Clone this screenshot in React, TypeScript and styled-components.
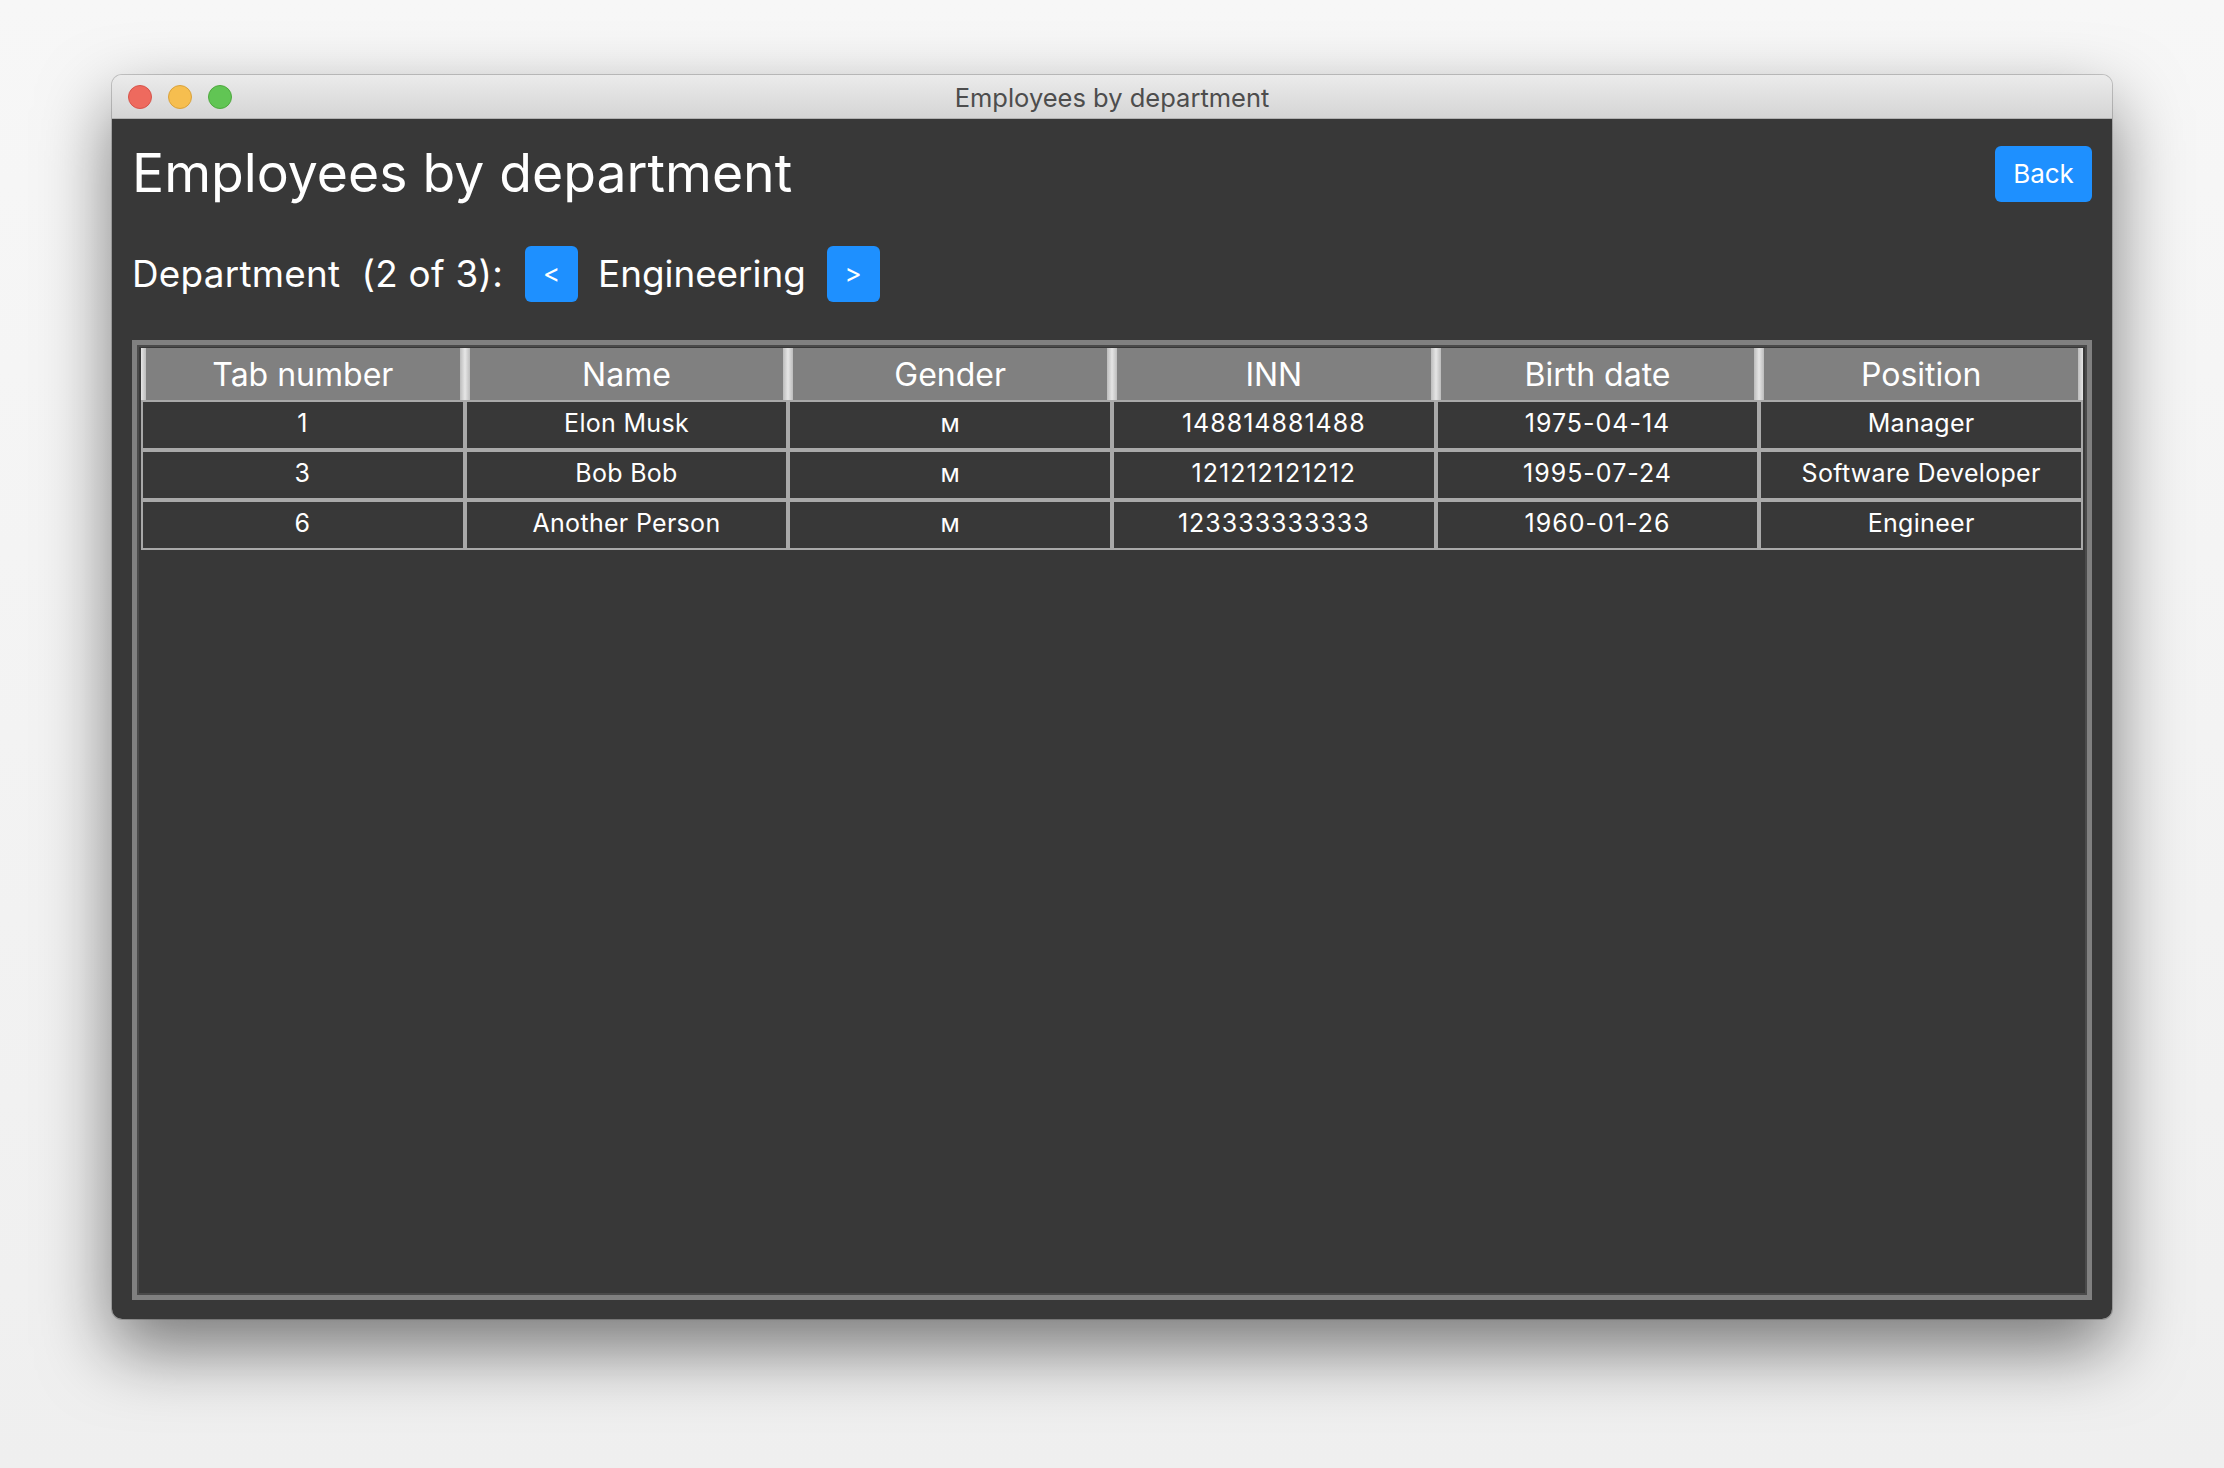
import React from 'react';
import styled, { createGlobalStyle } from 'styled-components';

const GlobalStyle = createGlobalStyle`
  html, body {
    margin: 0;
    padding: 0;
  }
  body {
    background: #f4f4f4;
    font-family: Inter, "Noto Sans", sans-serif;
  }
`;

const Page = styled.div`
  width: 2224px;
  height: 1468px;
  box-sizing: border-box;
  padding: 75px 112px 0;
  background: linear-gradient(#f7f7f7, #efefef);
`;

const Window = styled.div`
  width: 2000px;
  height: 1244px;
  display: flex;
  flex-direction: column;
  border-radius: 10px;
  overflow: hidden;
  box-shadow: 0 30px 70px rgba(0, 0, 0, 0.5), 0 0 0 1px rgba(0, 0, 0, 0.18);
`;

const TitleBar = styled.div`
  height: 44px;
  box-sizing: border-box;
  padding: 1px 16px 0;
  display: grid;
  grid-template-columns: 1fr auto 1fr;
  align-items: center;
  background: linear-gradient(#ebebeb, #d5d5d5);
  border-bottom: 1px solid #b1b1b1;
`;

const Lights = styled.div`
  display: flex;
  gap: 16px;
`;

const Light = styled.span<{ $fill: string; $edge: string }>`
  width: 24px;
  height: 24px;
  box-sizing: border-box;
  border-radius: 50%;
  background: ${(p) => p.$fill};
  border: 1px solid ${(p) => p.$edge};
`;

const WindowTitle = styled.div`
  font-size: 25.5px;
  color: #4d4d4d;
`;

const Content = styled.div`
  flex: 1;
  display: flex;
  flex-direction: column;
  padding: 27px 20px 19px;
  background: #383838;
  min-height: 0;
`;

const TopRow = styled.div`
  height: 56px;
  display: flex;
  align-items: center;
  justify-content: space-between;
`;

const Heading = styled.h1`
  margin: 0 0 3px;
  font-size: 53.5px;
  font-weight: 400;
  line-height: 56px;
  color: #fff;
`;

const BlueButton = styled.button<{ $w: number }>`
  width: ${(p) => p.$w}px;
  height: 56px;
  padding: 0 0 2px;
  border: none;
  border-radius: 6px;
  background: #1e90ff;
  color: #fff;
  font-family: Inter, "Noto Sans", sans-serif;
  font-size: 26px;
  cursor: pointer;
`;

const DeptRow = styled.div`
  margin-top: 44px;
  height: 56px;
  display: flex;
  align-items: center;
  font-size: 36.8px;
  color: #fff;
`;

const DeptLabel = styled.span`
  white-space: pre;
  letter-spacing: 0.28px;
  margin: 0 22px 2px 0;
`;

const DeptName = styled.span`
  margin: 0 21px 2px 20px;
`;

const TableFrame = styled.div`
  margin-top: 38px;
  flex: 1;
  box-sizing: border-box;
  border: 5px solid #808080;
  box-shadow: inset 0 0 0 2px #4a4a4a;
  padding: 3px 4px 4px;
`;

const Grid = styled.div`
  display: grid;
  grid-template-columns: repeat(6, 1fr);
`;

const HeadCell = styled.div`
  height: 52px;
  display: flex;
  align-items: center;
  justify-content: center;
  font-size: 32px;
  color: #fff;
  background:
    linear-gradient(to right, #e6e6e6, #bcbcbc) left / 5px 100% no-repeat,
    linear-gradient(to left, #e6e6e6, #bcbcbc) right / 5px 100% no-repeat,
    #808080;
`;

const BodyCell = styled.div<{ $numeric?: boolean }>`
  height: 50px;
  box-sizing: border-box;
  padding-bottom: 4px;
  border: 2px solid #a9a9a9;
  display: flex;
  align-items: center;
  justify-content: center;
  font-size: 25px;
  letter-spacing: ${(p) => (p.$numeric ? '1px' : '0.3px')};
  color: #fff;
  background: #383838;
`;

const columns = ['Tab number', 'Name', 'Gender', 'INN', 'Birth date', 'Position'];
const numericColumns = [0, 3, 4];

const employees = [
  ['1', 'Elon Musk', 'м', '148814881488', '1975-04-14', 'Manager'],
  ['3', 'Bob Bob', 'м', '121212121212', '1995-07-24', 'Software Developer'],
  ['6', 'Another Person', 'м', '123333333333', '1960-01-26', 'Engineer'],
];

export default function App() {
  return (
    <>
      <GlobalStyle />
      <Page>
        <Window>
          <TitleBar>
            <Lights>
              <Light $fill="#ee6a5e" $edge="#d6544b" />
              <Light $fill="#f6be4f" $edge="#d9a23c" />
              <Light $fill="#61c554" $edge="#4fa83f" />
            </Lights>
            <WindowTitle>Employees by department</WindowTitle>
            <span />
          </TitleBar>
          <Content>
            <TopRow>
              <Heading>Employees by department</Heading>
              <BlueButton $w={97}>Back</BlueButton>
            </TopRow>
            <DeptRow>
              <DeptLabel>Department  (2 of 3):</DeptLabel>
              <BlueButton $w={53}>&lt;</BlueButton>
              <DeptName>Engineering</DeptName>
              <BlueButton $w={53}>&gt;</BlueButton>
            </DeptRow>
            <TableFrame>
              <Grid>
                {columns.map((c) => (
                  <HeadCell key={c}>{c}</HeadCell>
                ))}
                {employees.map((row) =>
                  row.map((v, i) => (
                    <BodyCell key={row[0] + i} $numeric={numericColumns.includes(i)}>
                      {v}
                    </BodyCell>
                  ))
                )}
              </Grid>
            </TableFrame>
          </Content>
        </Window>
      </Page>
    </>
  );
}
